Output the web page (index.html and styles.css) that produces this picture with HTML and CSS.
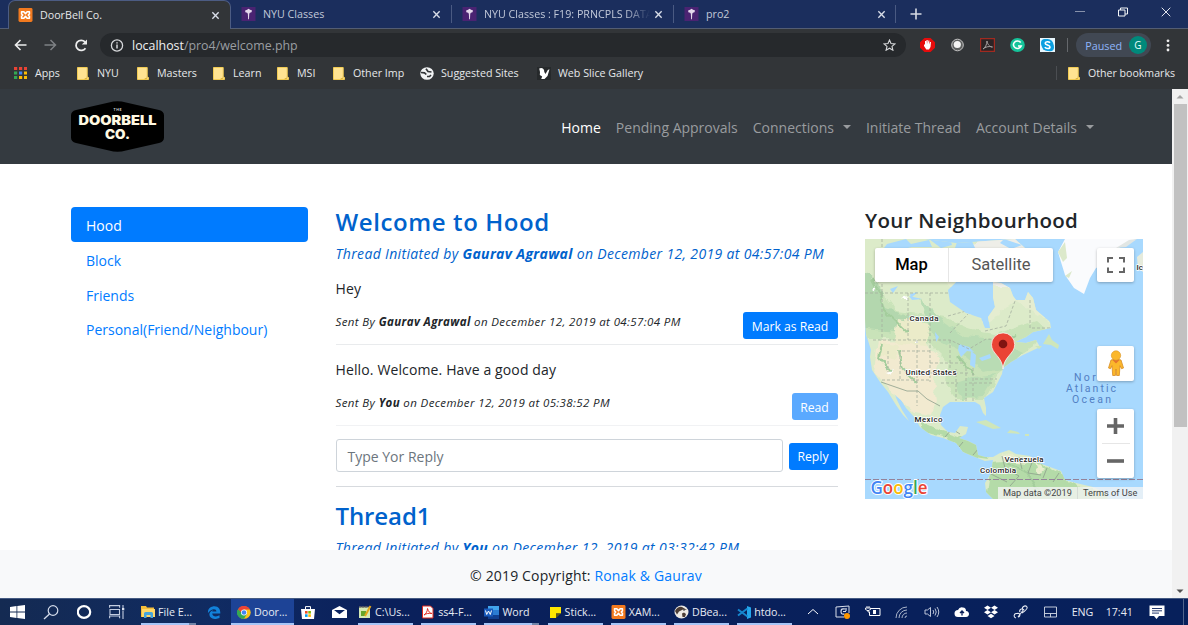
FILE: index.html
```html
<!DOCTYPE html>
<html lang="en">
<head>
<meta charset="utf-8">
<title>DoorBell Co.</title>
<link rel="stylesheet" href="styles.css">
</head>
<body>
<svg class="defs" width="0" height="0">
  <defs>
    <symbol id="xampp" viewBox="0 0 15 15"><rect width="15" height="15" rx="1.500" fill="#f27a1f"/><path d="M3.300 4h2.400L7.500 6l1.800-2h2.400v2.300L10.500 7.500l1.200 1.200V11H9.300L7.500 9l-1.800 2H3.300V8.700l1.200-1.200-1.200-1.200z" fill="none" stroke="#fff" stroke-width="1.700" stroke-linejoin="round"/></symbol>
    <symbol id="nyu" viewBox="0 0 15 15"><rect width="15" height="15" fill="#4a2372"/><path d="M7.500 2 9.200 3l2.100.8-.6 1.900-1.700.5-.7.900-.3 6H7.100l-.3-6-.8-.9-1.900-.5-.2-2L6 3z" fill="#e4d8ec"/></symbol>
    <symbol id="close" viewBox="0 0 10 10"><path d="M1.500 1.500l7 7m0-7l-7 7" stroke="currentColor" stroke-width="1.500"/></symbol>
    <symbol id="folder" viewBox="0 0 12 13"><path d="M.5.5h9.700v9l1.300 1v2H.5z" fill="#ffe391" stroke="#f1cb54"/><path d="M8 12.500v-1h2v-2" fill="none" stroke="#dfb641"/></symbol>
  </defs>
</svg>

<div class="browser">
  <div class="tabstrip">
    <div class="tab active"><svg class="fav"><use href="#xampp"/></svg><span class="tab-title">DoorBell Co.</span><svg class="x"><use href="#close"/></svg></div>
    <div class="tab t2"><svg class="fav"><use href="#nyu"/></svg><span class="tab-title">NYU Classes</span><svg class="x"><use href="#close"/></svg></div>
    <div class="tab t3"><svg class="fav"><use href="#nyu"/></svg><span class="tab-title fade">NYU Classes : F19: PRNCPLS DATA</span><svg class="x"><use href="#close"/></svg></div>
    <div class="tab t4"><svg class="fav"><use href="#nyu"/></svg><span class="tab-title">pro2</span><svg class="x"><use href="#close"/></svg></div>
    <svg class="plus" width="12" height="12" viewBox="0 0 12 12"><path d="M6 .5v11M.5 6h11" stroke="#d6dae4" stroke-width="1.600"/></svg>
    <div class="win">
      <svg width="10" height="10" viewBox="0 0 10 10"><path d="M0 4.500h10" stroke="#8791ab"/></svg>
      <svg width="10" height="10" viewBox="0 0 10 10"><path d="M.5 3h6.500v6H.5zM2.500 3V1h7v6H7" fill="none" stroke="#f3f5f8"/></svg>
      <svg width="10" height="10" viewBox="0 0 10 10"><path d="M.7.7l8.600 8.600m0-8.600L.7 9.300" stroke="#e2e5ee"/></svg>
    </div>
  </div>

  <div class="toolbar">
    <svg class="nav-ic" width="13" height="12" viewBox="0 0 13 12"><path d="M12.500 6H1.500M6.500 1l-5 5 5 5" fill="none" stroke="#eceded" stroke-width="1.600"/></svg>
    <svg class="nav-ic" width="13" height="12" viewBox="0 0 13 12"><path d="M.5 6h11M6.500 1l5 5-5 5" fill="none" stroke="#7e8184" stroke-width="1.500"/></svg>
    <svg class="nav-ic" width="14" height="13" viewBox="0 0 14 13"><path d="M11.500 9.200A5.200 5 0 1 1 11 2.900" fill="none" stroke="#eceded" stroke-width="1.800"/><path d="M13 .5v5H7.800z" fill="#eceded"/></svg>
    <div class="omnibox">
      <svg width="14" height="13" viewBox="0 0 14 13"><circle cx="7" cy="6.500" r="5.600" fill="none" stroke="#d6d8da" stroke-width="1.300"/><path d="M7 5.600v4M7 3.200v1.400" stroke="#d6d8da" stroke-width="1.500"/></svg>
      <span class="url"><b>localhost</b>/pro4/welcome.php</span>
      <svg width="13" height="12" viewBox="0 0 13 12"><path d="M6.500 1l1.500 3.500 4 .4-3 2.500.9 3.800-3.400-2-3.400 2L4 7.400 1 4.900l4-.4z" fill="none" stroke="#d6d8da" stroke-width="1.100"/></svg>
    </div>
    <div class="exts">
      <svg width="15" height="14" viewBox="0 0 15 14"><path d="M4.500 0h6L15 4.200v5.600L10.500 14h-6L0 9.800V4.200z" fill="#e60c0c"/><path d="M4 6l1 1V3h1.200v3l.3-4h1.200v4l.7-3.500h1L9.200 6.500l.8-2.500h1L10.500 9 9 11.500H6.300L4 8z" fill="#fff"/></svg>
      <svg width="15" height="14" viewBox="0 0 15 14"><circle cx="7.500" cy="7" r="5.800" fill="#5f6161" stroke="#c3c3c3"/><circle cx="7.300" cy="6.500" r="3.600" fill="#f4f4f4"/></svg>
      <svg width="15" height="14" viewBox="0 0 15 14"><path d="M.6.6h13.800v12.800H.6z" fill="#2b2426" stroke="#a02a20" stroke-width="1.200"/><path d="M3 11c2-1 4-4.500 4-8 .3 3 2.500 6 5.500 6C9 7.800 5 9 3 11z" fill="none" stroke="#a6a0a0"/></svg>
      <svg width="15" height="14" viewBox="0 0 15 14"><ellipse cx="7.500" cy="7" rx="7.300" ry="6.900" fill="#15c39a"/><path d="M10.700 4.600A4 3.700 0 1 0 11.200 8H8" fill="none" stroke="#fff" stroke-width="1.600"/></svg>
      <svg width="15" height="14" viewBox="0 0 15 14"><path d="M0 0h15v14H0z" fill="#e8f6fd"/><circle cx="5" cy="5" r="4" fill="#0b9fe1"/><circle cx="7.500" cy="7" r="6" fill="#0b9fe1"/><circle cx="10" cy="9.300" r="4" fill="#0b9fe1"/><path d="M10 4.800C8.800 3.200 5.200 3.400 5.200 5.200 5.200 7.300 10 6.500 10 8.900c0 2-3.900 2-5.200.2" fill="none" stroke="#fff" stroke-width="1.600"/></svg>
    </div>
    <div class="profile"><span>Paused</span><i>G</i></div>
    <svg class="kebab" width="4" height="13" viewBox="0 0 4 13"><g fill="#eee"><circle cx="2" cy="1.800" r="1.400"/><circle cx="2" cy="6.400" r="1.400"/><circle cx="2" cy="11" r="1.400"/></g></svg>
  </div>

  <div class="bookmarks">
    <span class="bm b-apps"><svg width="13" height="12" viewBox="0 0 13 12"><path d="M0 0h3.200v3H0zM5 0h3.200v3H5zM10 0h3v3h-3z" fill="#ea4335"/><path d="M0 4.500h3.200v3H0z" fill="#34a853"/><path d="M5 4.500h3.200v3H5z" fill="#4285f4"/><path d="M10 4.500h3v3h-3zM5 9h3.200v3H5zM10 9h3v3h-3z" fill="#fbbc05"/><path d="M0 9h3.200v3H0z" fill="#34a853"/></svg>Apps</span>
    <span class="bm b-nyu"><svg width="12" height="13"><use href="#folder"/></svg>NYU</span>
    <span class="bm b-masters"><svg width="12" height="13"><use href="#folder"/></svg>Masters</span>
    <span class="bm b-learn"><svg width="12" height="13"><use href="#folder"/></svg>Learn</span>
    <span class="bm b-msi"><svg width="12" height="13"><use href="#folder"/></svg>MSI</span>
    <span class="bm b-imp"><svg width="12" height="13"><use href="#folder"/></svg>Other Imp</span>
    <span class="bm b-sites"><svg width="14" height="13" viewBox="0 0 14 13"><ellipse cx="7" cy="6.500" rx="6.700" ry="6.300" fill="#f1f3f4"/><path d="M1 5.500l3.500.3L6.300 7.500M7 9.500h2.500L11 8M6 1.800L8 4.500l3.500.5" fill="none" stroke="#323538" stroke-width="1.700"/></svg>Suggested Sites</span>
    <span class="bm b-slice"><svg width="14" height="13" viewBox="0 0 14 13"><path d="M0 0h14v13H0z" fill="#26292b"/><path d="M2.200 1.500C4.500 0 7.500 1.500 7.300 5L8.500 7l2.300-4 1.700-.8L10.500 9l-3 3H4.200l1-2.500L2.800 8 3 5z" fill="#fff"/></svg>Web Slice Gallery</span>
    <span class="bm other"><svg width="12" height="13"><use href="#folder"/></svg>Other bookmarks</span>
  </div>
</div>

<div class="viewport">
  <div class="page">
    <header class="navbar">
      <svg class="brand" width="93" height="52" viewBox="0 0 93 52">
        <path d="M38 1.500Q46.500-1 55 1.500L88 9Q93 10.300 93 14.500v22q0 4.300-5 5.500L55 49.500q-8.500 2.500-17 0L5 42Q0 40.800 0 36.500v-22Q0 10.300 5 9z" fill="#000"/>
        <text x="46.500" y="10" text-anchor="middle" class="logo-the" textLength="8">THE</text>
        <text x="46.500" y="23.500" text-anchor="middle" class="logo-name" textLength="78" lengthAdjust="spacingAndGlyphs">DOORBELL</text>
        <text x="46.500" y="37.500" text-anchor="middle" class="logo-name" textLength="25" lengthAdjust="spacingAndGlyphs">CO.</text>
      </svg>
      <nav class="menu"><a class="on">Home</a><a>Pending Approvals</a><a class="drop">Connections</a><a>Initiate Thread</a><a class="drop">Account Details</a></nav>
    </header>

    <main class="columns">
      <aside class="pills"><a class="on">Hood</a><a>Block</a><a>Friends</a><a>Personal(Friend/Neighbour)</a></aside>

      <section class="threads">
        <h3>Welcome to Hood</h3>
        <p class="started">Thread Initiated by <b>Gaurav Agrawal</b> on December 12, 2019 at 04:57:04 PM</p>
        <article class="msg">
          <p>Hey</p>
          <div class="meta"><small>Sent By <b>Gaurav Agrawal</b> on December 12, 2019 at 04:57:04 PM</small><button class="btn b-mark">Mark as Read</button></div>
        </article>
        <article class="msg second">
          <p>Hello. Welcome. Have a good day</p>
          <div class="meta"><small>Sent By <b>You</b> on December 12, 2019 at 05:38:52 PM</small><button class="btn b-read">Read</button></div>
        </article>
        <div class="reply"><div class="field">Type Yor Reply</div><button class="btn b-reply">Reply</button></div>
        <h3 class="next">Thread1</h3>
        <p class="started">Thread Initiated by <b>You</b> on December 12, 2019 at 03:32:42 PM</p>
      </section>

      <section class="hood">
        <h4>Your Neighbourhood</h4>
        <div class="map">
          <svg class="terrain" width="278" height="260" viewBox="0 0 278 260">
            <defs>
              <path id="continent" d="M0 0H60L91 4 150 0 160 9 150 20 135 22 125 35 91 43 83 51 85 63 101 74 116 79 120 89H125L123 78 130 68 128 58V43L136 44 145 49 148 57 151 61 160 61 163 53 168 59 171 71 178 77 185 83 186 89 168 93 161 98 150 103 161 104 171 101 175 108 158 116 146 123 138 129 137 135 133 143 128 153 119 159 121 169V177L118 174 115 166 110 163H98L85 163 78 168 75 176 76 186 83 193 90 194 95 187 103 188 101 195 94 199 103 202 111 206 113 216 120 218 128 218 135 214 144 211 151 215 165 217 171 223 185 228 196 232 200 241 211 244 228 248 241 254 243 260H128L121 253 120 244 126 234 128 221 120 222 110 218 98 213 91 204 78 199 66 196 55 188 50 179 41 169 36 161 30 156 32 161 37 171 44 182 38 176 31 166 23 153 15 143 7 131 5 118 6 111 1 95 0 80z"/>
              <clipPath id="land"><use href="#continent"/></clipPath>
              <filter id="rough" x="0" y="0" width="100%" height="100%"><feTurbulence type="fractalNoise" baseFrequency=".12" numOctaves="2" seed="4"/><feDisplacementMap in="SourceGraphic" scale="7" xChannelSelector="R" yChannelSelector="G"/></filter>
            </defs>
            <rect width="278" height="260" fill="#a8d9fe"/>
            <use href="#continent" fill="#dcebc9"/>
            <g clip-path="url(#land)">
              <g filter="url(#rough)">
                <path d="M-9 55Q18 45 30 72L80 78Q102 92 130 95L172 82 187 95 139 126 120 160H91L80 142 84 124 65 105 40 100H-9z" fill="#c9e3b9"/>
                <path d="M-9 28l23 17 7 24 25 10-5 15-50-5z" fill="#b3d7ae"/>
                <path d="M55 60l20 20 24 17 32 3 27 13-19 17-21 3-24-21-27-14zM91 144l19-6 20-3-13 22-20 3z" fill="#b9dcb4"/>
                <path d="M13 102l45 1 17 15-6 23 3 22-7 14-15-3-21-18L9 132z" fill="#f2ead0"/>
                <path d="M33 80l33 5-6 22-31-4zM14 104l20 2-4 16-17-6z" fill="#ebebc9"/>
                <path d="M80 42h105v42l-35-23-27 24-23-12z" fill="#e5edd0"/>
                <path d="M115-5h45v53h-27L90 42z" fill="#eeeee8"/>
                <path d="M52 180l26 12 37 12 8 16-20-3-20-17-24-7zM126 224l40-4 30 14 8 10 39 10v16H120z" fill="#b4dba8"/>
                <path d="M136 214l14 3 13 8-25-2zM170 222l8 8-5 6z" fill="#e8eccd"/>
                <g fill="none" stroke="#a4cd9c" stroke-width="2"><path d="M7 40l9 17 4 15 22 21M17 105l-3 13 12 15M34 111l4 19 13 13M93 117l16 18M142 225l20 8 11 17M128 105l23-8"/></g>
                <g fill="#fff"><path d="M50 100h3v4h-3zM46 80l5-3 1 5zM21 134l7-2-3 4zM36 61l6-4-1 4zM6 52l5-5-2 7z"/></g>
              </g>
              <g fill="#a8d9fe"><path d="M22 5l19-5 5 5 18-4 3 7H47l-13 3-15-2zM64 0h21l2 6-11 3zM93 0h13l4 9H90zM139 0l18 6-11 4-11-6zM25 50l8-3-5 7zM45 55l8-2-7 6zM70 93l4 5-3 5zM94 105l10 3 5 5-7-1-6 6-3-7zM106 112l5 4-1 13-5-3zM114 119l11-4 1 4-9 3zM44 57l13 3-10 1z"/></g>
              <g fill="none" stroke="#a5afa0" stroke-width=".8" stroke-dasharray="3 2"><path d="M0 54h83M17 0v101M43 54v47M65 54v45M8 101h77l19 9 17-10 15 1M65 112H35v29h30M52 101v66M65 101v42M23 112v21M35 141H17M65 124h33M65 134h38M76 144h17M91 130v32M101 129v33M108 129v34M104 144h25M110 140h22M85 101v28M83 77l18-5M85 94l18-19M165 61v28h21M120 92l21-5 9-25"/></g>
              <path d="M16 143l26 9 11 0 9 8 13 7M80 198l7-8 8 5M98 203l-5 6M108 216l6-7M137 217l3 12 14 8-9 10M154 218l3 12M168 221l-5 13 13 2M182 229l-4 10M194 234l-6 9M126 235l16 8" fill="none" stroke="#8d9e8c" stroke-width=".8"/>
            </g>
            <path d="M193 13l7-13h71l-10 5-13 7-5 12-12 5-6 10-6 16-10-6-9-13-4-13z" fill="#fafbfd"/><path d="M193 13l7-10 2 16-4 4zM200 37l7-5-3 7zM232 28l6-6-3 11z" fill="#dce9cb"/>
            <path d="M251 9l13-8 8-1-11 8z" fill="#e1e6e4"/><path d="M272 18l6-5v20l-5-4z" fill="#e6ebdc"/>
            <path d="M178 105l6-10 3 6 7 5-1 4-7-4zM111 183l10-2 15 8-8 1zM142 194l3-3 8 2 2 2zM131 195l5 1zM160 195h4v2h-4zM170 107l7 0-3 3z" fill="#cfe6ba"/>
            <path d="M0 240.500h278" stroke="#94839a" stroke-dasharray="6 2"/>
            <g class="places">
              <text x="44.500" y="81.500" textLength="29">Canada</text><text x="40.500" y="136" textLength="51">United States</text><text x="49.500" y="182.500" textLength="28">Mexico</text><text x="139.500" y="223" textLength="39">Venezuela</text><text x="115" y="234" textLength="36">Colombia</text><text x="271.500" y="30.500">Ic</text>
            </g>
            <g class="ocean"><text x="209" y="141.500" textLength="36">North</text><text x="201" y="153" textLength="50">Atlantic</text><text x="207" y="164" textLength="39">Ocean</text></g>
            <path d="M138 130C137 117 126.500 115 126.500 105.500a11.600 11.600 0 0 1 23.200 0C149.700 115 139 117 138 130z" fill="#ea4335" stroke="#fff" stroke-width=".7"/><circle cx="138" cy="105" r="4.300" fill="#811411"/>
            <text x="5.500" y="254.500" class="google" textLength="57" lengthAdjust="spacingAndGlyphs"><tspan fill="#4285f4">G</tspan><tspan fill="#ea4335">o</tspan><tspan fill="#fbbc05">o</tspan><tspan fill="#4285f4">g</tspan><tspan fill="#34a853">l</tspan><tspan fill="#ea4335">e</tspan></text>
          </svg>
          <div class="kinds"><b>Map</b><span>Satellite</span></div>
          <div class="ctl full"><svg width="18" height="16" viewBox="0 0 18 16"><path d="M1 5.500V1h5M12 1h5v4.500M17 10.500V15h-5M6 15H1v-4.500" fill="none" stroke="#666" stroke-width="2"/></svg></div>
          <div class="ctl man"><svg width="18" height="27" viewBox="0 0 18 27"><path d="M4 10q5-2 10 0l2.500 8-2 .7-1.500-3-.7 9.800H9.600L9 19l-.6 6.500H5.700L5 15.700l-1.500 3-2-.7z" fill="#fbb72b" stroke="#d78b24" stroke-width=".8"/><path d="M5.500 10h7L9 13.500z" fill="#e4752d"/><circle cx="9" cy="5.500" r="4.700" fill="#fbb72b" stroke="#d9952a" stroke-width=".6"/></svg></div>
          <div class="ctl zoom"><svg width="17" height="16" viewBox="0 0 17 16"><path d="M8.500 0v16M0 8h17" stroke="#666" stroke-width="3.600"/></svg><hr><svg width="17" height="16" viewBox="0 0 17 16"><path d="M0 8h17" stroke="#666" stroke-width="3.600"/></svg></div>
          <div class="credit"><span class="c-data">Map data ©2019</span><span class="c-terms">Terms of Use</span></div>
        </div>
      </section>
    </main>
    <footer class="foot"><span>© 2019 Copyright: <a>Ronak &amp; Gaurav</a></span></footer>
  </div>
  <div class="scroll">
    <svg width="16" height="15" viewBox="0 0 16 15"><path d="M4.500 9.500L8 6l3.500 3.500z" fill="#a3a3a3"/></svg>
    <div class="thumb"></div>
    <svg class="down" width="16" height="14" viewBox="0 0 16 14"><path d="M4.500 5.500h7L8 9z" fill="#505050"/></svg>
  </div>
</div>

<div class="taskbar">
  <div class="tk w34"><svg width="15" height="14" viewBox="0 0 15 14"><path d="M0 2l6.500-1v5.600H0zM7.300.9L15 0v6.600H7.300zM0 7.400h6.500V13L0 12zM7.300 7.400H15V14l-7.700-1z" fill="#fff"/></svg></div>
  <div class="tk w34"><svg width="16" height="15" viewBox="0 0 16 15"><circle cx="10" cy="5.500" r="4.800" fill="none" stroke="#d4dbea" stroke-width="1.200"/><path d="M6.500 9L1 14" stroke="#d4dbea" stroke-width="1.300"/></svg></div>
  <div class="tk w32"><svg width="15" height="14" viewBox="0 0 15 14"><ellipse cx="7" cy="7" rx="6.200" ry="5.800" fill="none" stroke="#fff" stroke-width="2.200"/></svg></div>
  <div class="tk w34"><svg width="16" height="14" viewBox="0 0 16 14"><path d="M.6 2.800V.6h10v2.200M1 4.500h9.500v5H1zM.6 13.300V11h10v2.300M14 0v3M14 6v8" fill="none" stroke="#c3cde1" stroke-width="1.100"/><path d="M13 3h2.300v2.300H13z" fill="#dce2ee"/></svg></div>
  <div class="app file split"><svg width="14" height="12" viewBox="0 0 14 12"><path d="M0 0h5l1 1.500h7V11H0z" fill="#f5be39"/><path d="M1 3h13v8H1z" fill="#ffd869"/><path d="M3 12V7.500q0-1.500 1.500-1.500h6Q12 6 12 7.500V12H9.500V9h-4v3z" fill="#45a5de"/></svg>File E...</div>
  <div class="tk w35"><svg width="14" height="13" viewBox="0 0 14 13"><path d="M1 7C.5 2.500 4 .2 7.500.2 12 .2 13.500 4 13.300 7.500H5.200C5.500 11 10 11 12.500 9.300v2.800C7 14.500 1.500 12 2.500 7.500 3 5.500 5 4.500 6.500 4 5.500 4.500 5.200 5.500 5.200 5.500h4.200C9.400 2 4 2.500 1 7z" fill="#1282da"/></svg></div>
  <div class="app door"><svg width="14" height="13" viewBox="0 0 14 13"><ellipse cx="7" cy="6.500" rx="6.700" ry="6.300" fill="#fbc116"/><path d="M1 3.200A6.700 6.300 0 0 1 13 3.500H7L4.500 7.500z" fill="#e94335"/><path d="M1 3.200A6.700 6.300 0 0 0 7 12.800l3-5-5-.5z" fill="#34a853"/><circle cx="7" cy="6.500" r="3" fill="#fff"/><circle cx="7" cy="6.500" r="2.300" fill="#4285f4"/></svg>Door...</div>
  <div class="tk w28"><svg width="14" height="13" viewBox="0 0 14 13"><path d="M0 3h14l-1 10H1z" fill="#fff"/><path d="M4.500 3V.6h5V3" fill="none" stroke="#fff"/><path d="M4 5h2.600v2.600H4z" fill="#f25022"/><path d="M7.300 5h2.600v2.600H7.300z" fill="#7fba00"/><path d="M4 8.300h2.600v2.600H4z" fill="#00a4ef"/><path d="M7.300 8.300h2.600v2.600H7.300z" fill="#ffb900"/></svg></div>
  <div class="tk w34"><svg width="15" height="12" viewBox="0 0 15 12"><path d="M0 4l7.500-4L15 4v8H0z" fill="#fff"/><path d="M2 4h11L7.500 8.200z" fill="#0b2360"/></svg></div>
  <div class="apps">
    <div class="app"><svg width="14" height="14" viewBox="0 0 14 14"><path d="M1 2h11v11H1z" fill="#d5eab5"/><path d="M1 2h11M2 1v2m3-2v2m3-2v2" stroke="#666"/><path d="M3 6h5v5H3z" fill="#64a62c"/><path d="M12.500 1L7 11" stroke="#e2a71c" stroke-width="2"/></svg>C:\Us...</div>
    <div class="app"><svg width="14" height="14" viewBox="0 0 14 14"><path d="M1.500 1h8L12 3.500V13H1.500z" fill="#fff" stroke="#dd2a20"/><path d="M3 10c2-1 3.500-4 3.500-6.500C7 6 9 8.500 11 8.500 8 8 5 8.500 3 10z" fill="none" stroke="#e12a20"/></svg>ss4-F...</div>
    <div class="app split"><svg width="15" height="13" viewBox="0 0 15 13"><path d="M4 0h11v13H4z" fill="#2b7cd3"/><path d="M4 0h11v4H4z" fill="#41a5ee"/><path d="M4 9h11v4H4z" fill="#103f91"/><path d="M0 2.500h9v8H0z" fill="#185abd"/><path d="M1.500 4.500l1.200 4L4.500 5l1.800 3.500 1.200-4" fill="none" stroke="#fff"/></svg>Word</div>
    <div class="app"><svg width="14" height="13" viewBox="0 0 14 13"><path d="M2 1h11v6.500H8V12H2z" fill="#ffe600"/><path d="M8 12V7.500h5z" fill="#5d5714"/></svg>Stick...</div>
    <div class="app"><svg width="15" height="14"><use href="#xampp"/></svg>XAM...</div>
    <div class="app"><svg width="15" height="14" viewBox="0 0 15 14"><ellipse cx="7.500" cy="7" rx="7" ry="6.500" fill="#eeeae5"/><path d="M1 6Q4 1 8 2l5 3-4-.5-4 2-2 3M8 8.500l.5 3.500h2.500l1-3-2-1.500z" fill="#4b3c35"/><circle cx="10" cy="5" r=".8" fill="#222"/></svg>DBea...</div>
    <div class="app"><svg width="14" height="13" viewBox="0 0 14 13"><path d="M10 0l4 1.500v10L10 13z" fill="#23a7ed"/><path d="M10.500 2.500L1 9.500M10.500 10.500L1 3.500" stroke="#1687cf" stroke-width="2"/></svg>htdo...</div>
  </div>
  <div class="tray">
    <svg viewBox="0 0 16 14"><path d="M3 9l5-4.500L13 9" fill="none" stroke="#fff"/></svg>
    <svg viewBox="0 0 16 14"><path d="M1 2l13-1v7M9 12H1V2" fill="none" stroke="#d8deeb"/><path d="M10 4q-4-1-4 2.500T9.500 9M8 6.500h3M11 3v3" fill="none" stroke="#d8deeb" stroke-width="1.200"/><circle cx="12" cy="11" r="3" fill="#ff9800"/></svg>
    <svg viewBox="0 0 16 14"><path d="M6 3.500h9v7H4.500V7" fill="none" stroke="#fff"/><path d="M8 5h3v4H8z" fill="#fff"/><path d="M.5 3h5v1.500q-2.500 2.500-5 0zM2 1v2m2-2v2M3 5v2h2" fill="none" stroke="#fff" stroke-width=".9"/></svg>
    <svg viewBox="0 0 16 14"><path d="M2 13A11 11 0 0 1 13 2M5 13a8 8 0 0 1 8-8M8 13a5 5 0 0 1 5-5M11 13a2 2 0 0 1 2-2" fill="none" stroke="#a9b4cb"/></svg>
    <svg viewBox="0 0 16 14"><path d="M1 5h2.500L6.500 2.500v9L3.500 9H1zM9 5q1.500 2 0 4M11 3.500q2.500 3.500 0 7M13 2q3.500 5 0 10" fill="none" stroke="#cfd6e5" stroke-width=".9"/></svg>
    <svg viewBox="0 0 16 14"><path d="M4 12a3.500 3.500 0 0 1 0-7Q5.500 1.500 9 2.500q3 0 3 3.500c4 0 4 6 0 6z" fill="#fff"/><path d="M8 10.500V6M6 8l2-2 2 2" fill="none" stroke="#0a205b" stroke-width="1.300"/></svg>
    <svg viewBox="0 0 16 14"><path d="M4.500.5L8 2.700 4.500 5 1 2.700zM11.500.5L15 2.700 11.500 5 8 2.700zM4.500 5L8 7.300 4.500 9.500 1 7.300zM11.500 5L15 7.300 11.500 9.500 8 7.300zM8 8.700l3.500 2.300L8 13.200 4.500 11z" fill="#fff"/></svg>
    <svg viewBox="0 0 16 14"><path d="M3 13a2.300 2.300 0 0 1 1-4.500c3-1 4 3 1 3.500M5 12l6-8M7 7a2 2 0 0 1 2-3M10 5a2 2 0 0 1 4-3q1 2-5 6" fill="none" stroke="#e5e9f2" stroke-width="1.100"/></svg>
    <svg viewBox="0 0 16 14"><path d="M1.500 2h12v10h-12zM1.500 8.500h12M7.500 8.500V12" fill="none" stroke="#d5dbe8" stroke-width=".9"/></svg>
  </div>
  <span class="lang">ENG</span><span class="clock">17:41</span>
  <svg class="note" width="16" height="15" viewBox="0 0 16 15"><path d="M.5.500h15v10.500H10L7.500 14 5 11H.5z" fill="#fff"/><path d="M3 3.500h10M3 5.800h10M3 8.100h7" stroke="#0a205b" stroke-width=".9"/></svg>
  <i class="peek"></i>
</div>
</body>
</html>
```

FILE: styles.css
```css
* { box-sizing: border-box; }
body { margin: 0; width: 1188px; height: 625px; overflow: hidden; display: flex; flex-direction: column; font-family: "Open Sans", "Noto Sans", sans-serif; font-size: 14px; color: #212529; background: #fff; }
.defs { position: absolute; }
svg { display: block; flex: none; }
p, h3, h4 { margin: 0; }
b { font-weight: 700; }
h3, h4 { font-weight: 600; white-space: nowrap; }

/* browser frame */
.browser { height: 89px; flex: none; background: #323538; font-size: 10.7px; color: #e6e8ea; }
.tabstrip { height: 29px; display: flex; align-items: center; padding-left: 8px; background: #1b2e5d; border-bottom: 1px solid #535d73; }
.tab { display: flex; align-items: center; height: 28px; color: #c2c9d9; }
.tab.active { width: 223px; height: 29px; margin-bottom: -1px; padding: 0 10px 0 9px; background: #323538; border: 1px solid #4c5c83; border-bottom: 0; border-radius: 7px 7px 0 0; color: #e6e8ea; }
.fav { width: 15px; height: 14px; }
.tab-title { flex: 1; margin-left: 7px; overflow: hidden; white-space: nowrap; }
.fade { mask-image: linear-gradient(90deg, #000 85%, transparent 100%); }
.x { width: 9px; height: 9px; color: #d8dde8; }
.t2, .t3, .t4 { height: 18px; border-right: 1px solid #4a5a82; }
.t2 { width: 221px; padding: 0 10px 0 10px; }
.t3 { width: 222px; padding: 0 10px; }
.t4 { width: 222px; padding: 0 9px 0 10px; }
.t3 .x { margin-left: 4px; }
.plus { margin-left: 14px; }
.win { display: flex; gap: 33px; margin-left: auto; padding: 0 17px 4px 0; }
.toolbar { height: 32px; display: flex; align-items: center; padding: 0 18px 0 14px; }
.nav-ic { margin-right: 17px; }
.omnibox { width: 808px; height: 24px; margin-left: -5px; padding: 0 10px; display: flex; align-items: center; border-radius: 12px; background: #26292c; font-size: 12.400px; }
.url { flex: 1; margin-left: 8px; color: #9a9ea2; }
.url b { font-weight: 400; color: #f0f1f2; }
.exts { display: flex; gap: 15px; margin-left: 14px; }
.profile { display: flex; align-items: center; justify-content: space-between; width: 75px; height: 24px; margin-left: 21px; padding: 0 4px 0 9px; border-radius: 12px; background: #414853; color: #8fb5fa; font-size: 10.800px; position: relative; }
.profile::before { content: ""; position: absolute; left: -9px; top: 5px; width: 1px; height: 14px; background: #65686c; }
.profile i { width: 18px; height: 18px; border-radius: 9px; background: #00897b; color: #e9fffb; font: 10px/18px "Open Sans", sans-serif; text-align: center; }
.kebab { margin-left: 15px; }
.bookmarks { height: 28px; display: flex; align-items: center; padding: 0 13px 5px 14px; }
.bm { display: flex; align-items: center; gap: 8px; white-space: nowrap; }
.bm svg { margin-top: 1px; }
.b-apps { width: 63px; }
.b-nyu { width: 60px; }
.b-masters { width: 76px; }
.b-learn { width: 64px; }
.b-msi { width: 56px; }
.b-imp { width: 87px; }
.b-sites { width: 117px; }
.b-sites, .b-slice { gap: 7px; }
.other { margin-left: auto; padding-left: 11px; border-left: 1px solid #4b4e52; font-size: 10.600px; }

/* page */
.viewport { height: 509px; flex: none; display: flex; }
.page { width: 1172px; height: 509px; overflow: hidden; display: flex; flex-direction: column; }
.navbar { height: 75px; flex: none; display: flex; justify-content: space-between; padding: 12px 78px 0 71px; background: #343a40; }
.logo-the { font: 700 3.500px Lato, sans-serif; fill: #ddd; }
.logo-name { font: 900 12.500px Inter, sans-serif; fill: #fff9e2; }
.menu { display: flex; gap: 15px; padding-top: 17px; color: #999c9f; line-height: 20px; white-space: nowrap; }
.menu .on { color: #fff; }
.menu .drop { display: flex; gap: 9px; }
.drop::after { content: ""; margin-top: 7px; width: 0; height: 0; border: 4px solid transparent; border-top-color: currentColor; border-bottom: 0; }
.columns { flex: 1; min-height: 0; display: flex; align-items: flex-start; padding: 43px 29px 0 71px; overflow: hidden; }
.pills { width: 237px; display: flex; flex-direction: column; color: #007bff; }
.pills a { height: 34.800px; padding: 1px 15px 0; line-height: 35px; white-space: nowrap; }
.pills .on { color: #fff; background: #007bff; border-radius: 4px; }
.threads { width: 502px; margin-left: 27.500px; flex: none; }
.threads h3 { font-size: 24px; line-height: 30px; letter-spacing: .6px; color: #0062cc; }
.started { margin-top: 6px; line-height: 22px; font-style: italic; letter-spacing: .34px; color: #0062cc; white-space: nowrap; }
.msg { height: 81px; padding-top: 13px; border-bottom: 1px solid #e9ebed; }
.threads .started + .msg { height: 80px; }
.msg p { line-height: 22px; letter-spacing: .13px; }
.msg.second { padding-top: 14px; border-color: #f1f2f4; }
.meta { display: flex; justify-content: space-between; margin-top: 12px; }
.meta small { font-size: 11.500px; line-height: 20px; font-style: italic; letter-spacing: .38px; white-space: nowrap; }
.btn { height: 27px; padding: 2px 0 0; border: 0; border-radius: 3px; background: #007bff; color: #fff; font: 12.200px "Open Sans", sans-serif; }
.b-mark { width: 95px; }
.b-read { width: 46px; background: #5aa9ff; }
.b-reply { width: 49px; padding-top: 0; }
.reply { height: 61px; display: flex; align-items: flex-start; justify-content: space-between; padding-top: 13px; border-bottom: 1px solid #d7dade; }
.field { width: 447px; height: 33px; padding: 0 11px; line-height: 34px; border: 1px solid #ced4da; border-radius: 3px; color: #6c757d; }
.b-reply { margin-top: 4px; }
.threads .next { margin-top: 14px; letter-spacing: -.1px; }
.hood { width: 278px; margin-left: 27.500px; flex: none; }
.hood h4 { font-size: 20.500px; line-height: 26px; margin-bottom: 6px; letter-spacing: .3px; }
.map { position: relative; height: 260px; font-family: Roboto, sans-serif; overflow: hidden; }
.places { font: 500 8px Roboto, sans-serif; fill: #222; stroke: #fff; stroke-width: 1.500px; paint-order: stroke; }
.ocean { font: 10.500px Roboto, sans-serif; fill: #5280c4; }
.google { font: 600 17.500px "Open Sans", sans-serif; stroke: #fff; stroke-width: 2px; paint-order: stroke; }
.kinds { position: absolute; left: 10px; top: 9px; width: 178px; height: 34px; display: flex; background: #fff; border-radius: 2px; box-shadow: 0 1px 3px #0004; font-size: 16.500px; line-height: 34px; text-align: center; color: #565656; }
.kinds b { width: 74px; font-weight: 500; color: #000; border-right: 1px solid #e6e6e6; }
.kinds span { flex: 1; }
.ctl { position: absolute; left: 232px; width: 37px; display: flex; flex-direction: column; align-items: center; justify-content: center; background: #fff; border-radius: 2px; box-shadow: 0 1px 3px #0004; }
.full { top: 9px; height: 34px; }
.man { top: 107px; height: 35px; }
.zoom { top: 170px; height: 69px; justify-content: space-between; padding: 9px 0; }
.zoom hr { width: 28px; height: 1px; margin: 0; border: 0; background: #e6e6e6; }
.credit { position: absolute; right: 0; bottom: 0; height: 12px; display: flex; font-size: 9.200px; line-height: 12px; color: #444; white-space: nowrap; }
.credit span { background: #f5f5f5c8; }
.c-data { width: 79px; padding-left: 5px; }
.c-terms { width: 66px; padding-left: 5px; border-left: 1px solid #d6dbd6; }
.foot { height: 48px; flex: none; margin-top: auto; display: flex; align-items: center; justify-content: center; padding-top: 3px; background: #f8f9fa; letter-spacing: .16px; }
.foot a { color: #007bff; }
.scroll { width: 16px; height: 509px; background: #f1f1f1; display: flex; flex-direction: column; }
.thumb { height: 323px; margin: 0 1px 0 2px; background: #c1c1c1; }
.down { margin-top: auto; }

/* desktop taskbar */
.taskbar { height: 27px; flex: none; display: flex; align-items: center; background: linear-gradient(90deg, #142a52, #102b62 18%, #0a205b 32%, #07205b); border-top: 1px solid #455b82; color: #e7ebf4; font-size: 10.700px; }
.tk { display: flex; justify-content: center; }
.w34 { width: 34px; }
.w32 { width: 32px; }
.w35 { width: 35px; }
.w28 { width: 28px; }
.app { display: flex; align-items: center; gap: 3px; width: 55px; height: 26px; padding-top: 2px; border-bottom: 2px solid #a6c5f7; white-space: nowrap; }
.split { border-image: linear-gradient(90deg, #a6c5f7 84%, #7185a8 84%) 2; border-width: 0 0 2px; border-style: solid; }
.file { margin-left: 7px; }
.door { width: 63px; padding-left: 6px; background: #1d4396; }
.apps { display: flex; gap: 8.200px; margin-left: 2px; }
.tray { display: flex; gap: 13.700px; margin-left: 13px; }
.tray svg { width: 16px; height: 14px; }
.lang { margin-left: 13px; width: 34px; }
.clock { width: 43px; }
.note { margin: 1px 0 0; }
.peek { margin-left: auto; margin-right: 4px; width: 1px; height: 26px; background: #50648c; }
```
